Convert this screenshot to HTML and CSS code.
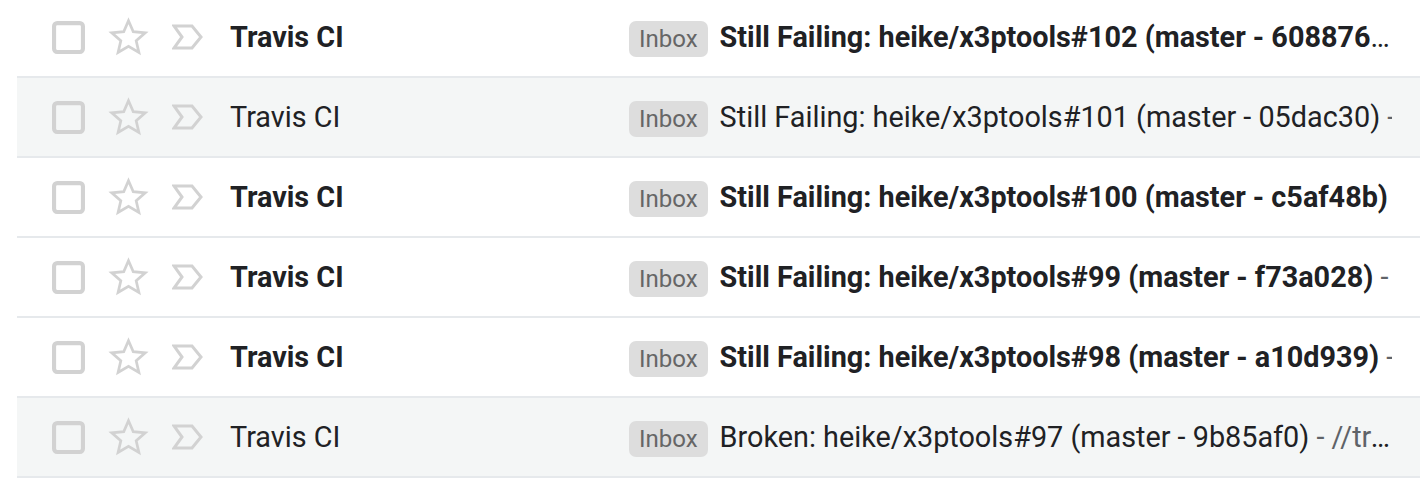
FILE: index.html
```html
<!DOCTYPE html>
<html>
<head>
<meta charset="utf-8">
<link rel="stylesheet" href="styles.css">
</head>
<body>
<div class="list">
  <div class="row unread">
    <div class="cell"><svg class="ico" viewBox="0 0 32 32"><rect x="2" y="2" width="28" height="28" rx="3"/></svg></div>
    <div class="cell"><svg class="ico star" viewBox="0 0 24 24"><polygon points="12,2.2 14.8,8.6 21.8,9.3 16.5,13.9 18.1,20.8 12,17.2 5.9,20.8 7.5,13.9 2.2,9.3 9.2,8.6"/></svg></div>
    <div class="cell"><svg class="ico imp" viewBox="0 0 32 26"><polygon points="2,2 20,2 29,13 20,24 2,24 10,13"/></svg></div>
    <div class="sender">Travis CI</div>
    <div class="label">Inbox</div>
    <div class="subject ellipsis"><span class="subj">Still Failing: heike/x3ptools#102 (master - 6088764)</span><span class="snip"> - //travis-ci.org/heike/x3ptools/builds</span></div>
  </div>
  <div class="row read">
    <div class="cell"><svg class="ico" viewBox="0 0 32 32"><rect x="2" y="2" width="28" height="28" rx="3"/></svg></div>
    <div class="cell"><svg class="ico star" viewBox="0 0 24 24"><polygon points="12,2.2 14.8,8.6 21.8,9.3 16.5,13.9 18.1,20.8 12,17.2 5.9,20.8 7.5,13.9 2.2,9.3 9.2,8.6"/></svg></div>
    <div class="cell"><svg class="ico imp" viewBox="0 0 32 26"><polygon points="2,2 20,2 29,13 20,24 2,24 10,13"/></svg></div>
    <div class="sender">Travis CI</div>
    <div class="label">Inbox</div>
    <div class="subject"><span class="subj">Still Failing: heike/x3ptools#101 (master - 05dac30)</span><span class="snip"> - //travis-ci.org/heike/x3ptools/builds</span></div>
  </div>
  <div class="row unread">
    <div class="cell"><svg class="ico" viewBox="0 0 32 32"><rect x="2" y="2" width="28" height="28" rx="3"/></svg></div>
    <div class="cell"><svg class="ico star" viewBox="0 0 24 24"><polygon points="12,2.2 14.8,8.6 21.8,9.3 16.5,13.9 18.1,20.8 12,17.2 5.9,20.8 7.5,13.9 2.2,9.3 9.2,8.6"/></svg></div>
    <div class="cell"><svg class="ico imp" viewBox="0 0 32 26"><polygon points="2,2 20,2 29,13 20,24 2,24 10,13"/></svg></div>
    <div class="sender">Travis CI</div>
    <div class="label">Inbox</div>
    <div class="subject"><span class="subj">Still Failing: heike/x3ptools#100 (master - c5af48b)</span><span class="snip"> - //travis-ci.org/heike/x3ptools/builds</span></div>
  </div>
  <div class="row unread">
    <div class="cell"><svg class="ico" viewBox="0 0 32 32"><rect x="2" y="2" width="28" height="28" rx="3"/></svg></div>
    <div class="cell"><svg class="ico star" viewBox="0 0 24 24"><polygon points="12,2.2 14.8,8.6 21.8,9.3 16.5,13.9 18.1,20.8 12,17.2 5.9,20.8 7.5,13.9 2.2,9.3 9.2,8.6"/></svg></div>
    <div class="cell"><svg class="ico imp" viewBox="0 0 32 26"><polygon points="2,2 20,2 29,13 20,24 2,24 10,13"/></svg></div>
    <div class="sender">Travis CI</div>
    <div class="label">Inbox</div>
    <div class="subject"><span class="subj">Still Failing: heike/x3ptools#99 (master - f73a028)</span><span class="snip"> - //travis-ci.org/heike/x3ptools/builds</span></div>
  </div>
  <div class="row unread">
    <div class="cell"><svg class="ico" viewBox="0 0 32 32"><rect x="2" y="2" width="28" height="28" rx="3"/></svg></div>
    <div class="cell"><svg class="ico star" viewBox="0 0 24 24"><polygon points="12,2.2 14.8,8.6 21.8,9.3 16.5,13.9 18.1,20.8 12,17.2 5.9,20.8 7.5,13.9 2.2,9.3 9.2,8.6"/></svg></div>
    <div class="cell"><svg class="ico imp" viewBox="0 0 32 26"><polygon points="2,2 20,2 29,13 20,24 2,24 10,13"/></svg></div>
    <div class="sender">Travis CI</div>
    <div class="label">Inbox</div>
    <div class="subject"><span class="subj">Still Failing: heike/x3ptools#98 (master - a10d939)</span><span class="snip"> - //travis-ci.org/heike/x3ptools/builds</span></div>
  </div>
  <div class="row read">
    <div class="cell"><svg class="ico" viewBox="0 0 32 32"><rect x="2" y="2" width="28" height="28" rx="3"/></svg></div>
    <div class="cell"><svg class="ico star" viewBox="0 0 24 24"><polygon points="12,2.2 14.8,8.6 21.8,9.3 16.5,13.9 18.1,20.8 12,17.2 5.9,20.8 7.5,13.9 2.2,9.3 9.2,8.6"/></svg></div>
    <div class="cell"><svg class="ico imp" viewBox="0 0 32 26"><polygon points="2,2 20,2 29,13 20,24 2,24 10,13"/></svg></div>
    <div class="sender">Travis CI</div>
    <div class="label">Inbox</div>
    <div class="subject ellipsis"><span class="subj">Broken: heike/x3ptools#97 (master - 9b85af0)</span><span class="snip"> - //travis-ci.org/heike/x3ptools/builds</span></div>
  </div>
</div>
</body>
</html>
```
FILE: styles.css
```css
html, body {
  margin: 0;
  padding: 0;
  background: #ffffff;
}
body {
  font-family: Roboto, "Liberation Sans", sans-serif;
  color: #202124;
  overflow: hidden;
}
.list {
  margin-top: -2px;
  margin-left: 17px;
}
.row {
  display: flex;
  align-items: center;
  height: 78px;
  border-bottom: 2px solid #e6e9ec;
  padding-left: 21px;
  padding-right: 28px;
  font-size: 28.8px;
}
.row.read {
  background: #f4f6f6;
}
.row.unread {
  background: #ffffff;
}
.row.unread .sender,
.row.unread .subj {
  font-weight: 700;
}
.cell {
  width: 60px;
  height: 40px;
  display: flex;
  align-items: center;
  justify-content: center;
  flex: none;
}
.ico {
  width: 33px;
  height: 33px;
  fill: none;
  stroke: #d2d2d2;
  stroke-width: 4;
}
.ico.star {
  width: 41px;
  height: 41px;
  stroke-width: 1.6;
  stroke-linejoin: miter;
}
.ico.imp {
  width: 32px;
  height: 26px;
  stroke-width: 3;
}
.sender {
  flex: none;
  width: 399px;
  margin-left: 12px;
  white-space: nowrap;
  overflow: hidden;
}
.label {
  flex: none;
  background: #dddddd;
  color: #666666;
  font-size: 24px;
  line-height: 36px;
  height: 36px;
  padding: 0 10px;
  border-radius: 7px;
  margin-right: 12px;
  margin-top: 4px;
}
.subject {
  flex: 1;
  min-width: 0;
  white-space: nowrap;
  overflow: hidden;
}
.subject.ellipsis {
  text-overflow: ellipsis;
}
.snip {
  color: #5f6368;
}
```
